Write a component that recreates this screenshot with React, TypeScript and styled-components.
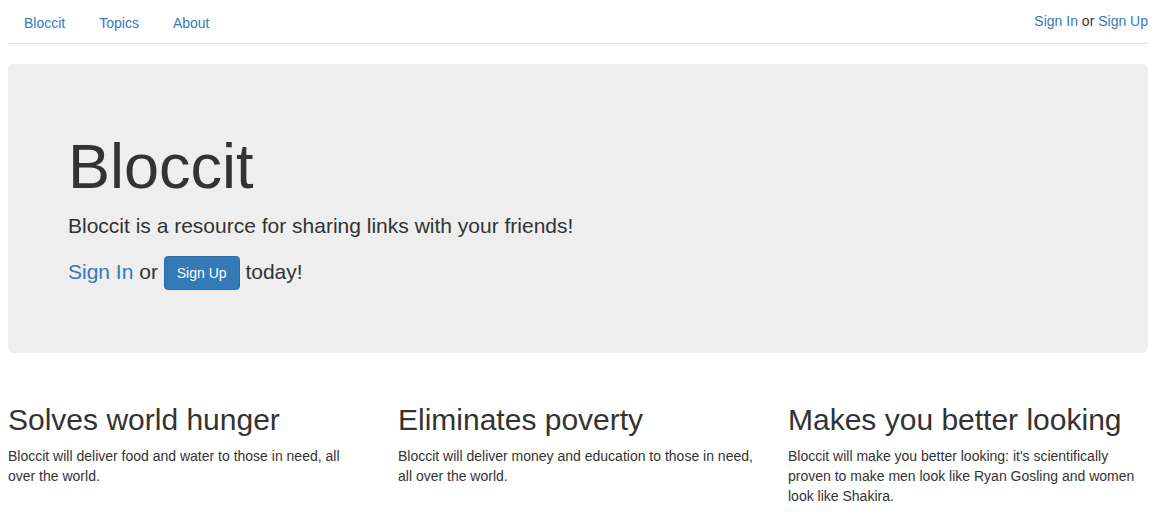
import React from "react";
import styled, { createGlobalStyle } from "styled-components";

const Global = createGlobalStyle`
  html, body { margin: 0; padding: 0; background: #fff; }
  body {
    font-family: "Liberation Sans", Arial, Helvetica, sans-serif;
    font-size: 14px;
    line-height: 1.42857143;
    color: #333;
  }
  * { box-sizing: border-box; }
`;

const Page = styled.div`
  padding: 0 9px 0 8px;
`;

const Header = styled.header`
  display: flex;
  justify-content: space-between;
  align-items: flex-start;
  height: 44px;
  padding-top: 3px;
  border-bottom: 1px solid #ddd;
`;

const NavList = styled.ul`
  display: flex;
  list-style: none;
  margin: 0 0 0 1px;
  padding: 0;
  gap: 4px;
`;

const NavLink = styled.a`
  display: block;
  padding: 10px 15px;
  line-height: 20px;
  color: #337ab7;
  text-decoration: none;
  font-size: 14px;
`;

const Auth = styled.div`
  padding-top: 8px;
  line-height: 20px;
  font-size: 14px;
  color: #333;
`;

const Link = styled.a`
  color: #337ab7;
  text-decoration: none;
`;

const Jumbotron = styled.section`
  margin-top: 20px;
  margin-bottom: 30px;
  background: #eee;
  border-radius: 6px;
  padding: 48px 60px 48px;
  height: 289px;
`;

const Title = styled.h1`
  margin: 20px 0 10px;
  font-size: 63px;
  font-weight: 500;
  line-height: 1.1;
  color: #333;
`;

const Lead = styled.p`
  margin: 0 0 15px;
  font-size: 21px;
  font-weight: 200;
  line-height: 30px;
`;

const LeadLink = styled.a`
  color: #337ab7;
  text-decoration: none;
`;

const Button = styled.a`
  display: inline-block;
  padding: 6px 12px;
  font-size: 14px;
  line-height: 20px;
  color: #fff;
  background: #337ab7;
  border: 1px solid #2e6da4;
  border-radius: 4px;
  text-decoration: none;
  vertical-align: middle;
`;

const Features = styled.div`
  display: grid;
  grid-template-columns: repeat(3, 360px);
  column-gap: 30px;
`;

const FeatureTitle = styled.h2`
  margin: 20px 0 10px;
  font-size: 30px;
  font-weight: 500;
  line-height: 1.1;
  color: #333;
`;

const FeatureText = styled.p`
  margin: 0 0 10px;
  font-size: 14px;
  line-height: 20px;
`;

const features = [
  {
    title: "Solves world hunger",
    text: "Bloccit will deliver food and water to those in need, all over the world.",
  },
  {
    title: "Eliminates poverty",
    text: "Bloccit will deliver money and education to those in need, all over the world.",
  },
  {
    title: "Makes you better looking",
    text: "Bloccit will make you better looking: it's scientifically proven to make men look like Ryan Gosling and women look like Shakira.",
  },
];

export default function App() {
  return (
    <Page>
      <Global />
      <Header>
        <NavList>
          <li><NavLink href="#">Bloccit</NavLink></li>
          <li><NavLink href="#">Topics</NavLink></li>
          <li><NavLink href="#">About</NavLink></li>
        </NavList>
        <Auth>
          <Link href="#">Sign In</Link> or <Link href="#">Sign Up</Link>
        </Auth>
      </Header>
      <Jumbotron>
        <Title>Bloccit</Title>
        <Lead>Bloccit is a resource for sharing links with your friends!</Lead>
        <Lead>
          <LeadLink href="#">Sign In</LeadLink> or <Button href="#">Sign Up</Button> today!
        </Lead>
      </Jumbotron>
      <Features>
        {features.map((f) => (
          <div key={f.title}>
            <FeatureTitle>{f.title}</FeatureTitle>
            <FeatureText>{f.text}</FeatureText>
          </div>
        ))}
      </Features>
    </Page>
  );
}
